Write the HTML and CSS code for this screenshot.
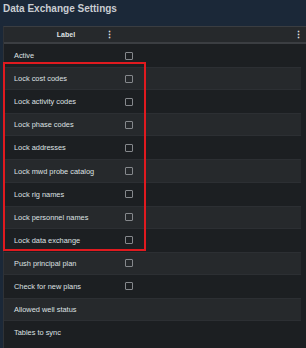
FILE: index.html
```html
<!DOCTYPE html>
<html lang="en">
<head>
    <meta charset="UTF-8">
    <title>Data Exchange Settings</title>
    <link rel="stylesheet" href="styles.css">
</head>
<body>

    <h1 class="title">Data Exchange Settings</h1>

    <div class="grid">
        <div class="grid-header">
            <div class="col-label">Label <span class="menu">&#8942;</span></div>
            <div class="col-value"><span class="menu">&#8942;</span></div>
        </div>

        <div class="row"><div class="col-label">Active</div><div class="col-value"><span class="check"></span></div></div>
        <div class="row"><div class="col-label">Lock cost codes</div><div class="col-value"><span class="check"></span></div></div>
        <div class="row"><div class="col-label">Lock activity codes</div><div class="col-value"><span class="check"></span></div></div>
        <div class="row"><div class="col-label">Lock phase codes</div><div class="col-value"><span class="check"></span></div></div>
        <div class="row"><div class="col-label">Lock addresses</div><div class="col-value"><span class="check"></span></div></div>
        <div class="row"><div class="col-label">Lock mwd probe catalog</div><div class="col-value"><span class="check"></span></div></div>
        <div class="row"><div class="col-label">Lock rig names</div><div class="col-value"><span class="check"></span></div></div>
        <div class="row"><div class="col-label">Lock personnel names</div><div class="col-value"><span class="check"></span></div></div>
        <div class="row"><div class="col-label">Lock data exchange</div><div class="col-value"><span class="check"></span></div></div>
        <div class="row"><div class="col-label">Push principal plan</div><div class="col-value"><span class="check"></span></div></div>
        <div class="row"><div class="col-label">Check for new plans</div><div class="col-value"><span class="check"></span></div></div>
        <div class="row"><div class="col-label">Allowed well status</div><div class="col-value"></div></div>
        <div class="row"><div class="col-label">Tables to sync</div><div class="col-value"></div></div>

        <!-- highlight drawn over the lock rows -->
        <div class="highlight"></div>
    </div>

</body>
</html>
```

FILE: styles.css
```css
body {
    margin: 0;
    padding: 0;
    background-color: #1b2838;
    font-family: 'Liberation Sans', Arial, sans-serif;
    color: #dfe1e3;
    overflow: hidden;
}

.title {
    margin: 0;
    padding: 2px 0 0 3px;
    height: 24px;
    font-size: 10px;
    line-height: 14px;
    font-weight: bold;
    color: #c9cdd2;
}

.grid {
    position: relative;
    margin-left: 3px;
    height: 330px;
    background-color: #1c1f22;
    border-top: 1px solid #3a3d41;
    border-left: 1px solid #2f3236;
}

.grid-header {
    display: flex;
    height: 15px;
    background-color: #26292c;
    border-bottom: 2px solid #3b3e42;
    font-size: 7px;
    font-weight: bold;
}

.grid-header .col-label {
    justify-content: center;
    position: relative;
}

.grid-header .col-value {
    justify-content: flex-end;
    padding-right: 3px;
}

.menu {
    font-size: 9px;
    font-weight: bold;
    color: #e8eaec;
}

.grid-header .col-label .menu {
    position: absolute;
    right: 4px;
}

.col-label {
    display: flex;
    align-items: center;
    width: 114px;
    padding-left: 10px;
    box-sizing: border-box;
}

.col-value {
    display: flex;
    align-items: center;
    flex: 1;
    padding-left: 7px;
}

.row {
    display: flex;
    height: 23.1px;
    margin-right: 5px;
    font-size: 7.4px;
    box-sizing: border-box;
}

.row:nth-of-type(odd) {
    background-color: #26292c;
    border-top: 1px solid #2c2f33;
    border-bottom: 1px solid #2c2f33;
}

.row:last-of-type {
    border-bottom: 1px solid #2e3135;
}

.check {
    width: 6px;
    height: 6px;
    border: 1.5px solid #85888c;
    border-radius: 1px;
}

.highlight {
    position: absolute;
    left: -1px;
    top: 35px;
    width: 139px;
    height: 185px;
    border: 2px solid #e01a1f;
}
```
